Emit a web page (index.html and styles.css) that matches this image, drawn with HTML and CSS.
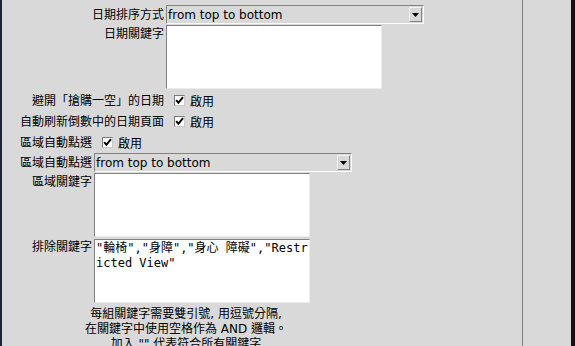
FILE: index.html
```html
<!DOCTYPE html>
<html lang="zh-Hant">
<head>
  <meta charset="UTF-8">
  <meta name="viewport" content="width=device-width, initial-scale=1.0">
  <title>搶票設定</title>
  <link rel="stylesheet" href="styles.css">
</head>
<body>
  <div class="window">
    <div class="panel">

      <div class="form">
        <span class="label">日期排序方式</span>
        <div class="select">
          <span>from top to bottom</span>
          <span class="drop"><svg width="7" height="4" viewBox="0 0 7 4"><polygon points="0,0 7,0 3.5,4" fill="#000"/></svg></span>
        </div>

        <span class="label top">日期關鍵字</span>
        <textarea class="text-box"></textarea>

        <span class="label">避開「搶購一空」的日期</span>
        <label class="check">
          <span class="box"><svg width="9" height="9" viewBox="0 0 9 9"><polyline points="1.2,4.2 3.4,6.8 8,1.2" fill="none" stroke="#000" stroke-width="2"/></svg></span>
          啟用
        </label>

        <span class="label">自動刷新倒數中的日期頁面</span>
        <label class="check">
          <span class="box"><svg width="9" height="9" viewBox="0 0 9 9"><polyline points="1.2,4.2 3.4,6.8 8,1.2" fill="none" stroke="#000" stroke-width="2"/></svg></span>
          啟用
        </label>
      </div>

      <div class="form">
        <span class="label">區域自動點選</span>
        <label class="check">
          <span class="box"><svg width="9" height="9" viewBox="0 0 9 9"><polyline points="1.2,4.2 3.4,6.8 8,1.2" fill="none" stroke="#000" stroke-width="2"/></svg></span>
          啟用
        </label>

        <span class="label">區域自動點選</span>
        <div class="select">
          <span>from top to bottom</span>
          <span class="drop"><svg width="7" height="4" viewBox="0 0 7 4"><polygon points="0,0 7,0 3.5,4" fill="#000"/></svg></span>
        </div>

        <span class="label top">區域關鍵字</span>
        <textarea class="text-box"></textarea>

        <span class="label top">排除關鍵字</span>
        <textarea class="text-box last">"輪椅","身障","身心 障礙","Restricted View"</textarea>

        <p class="hint">每組關鍵字需要雙引號, 用逗號分隔,<br>在關鍵字中使用空格作為 AND 邏輯。<br>加入 "" 代表符合所有關鍵字</p>
      </div>

    </div>
    <div class="side"></div>
  </div>
</body>
</html>
```

FILE: styles.css
```css
body {margin: 0; background: #d9d9d9; color: #000; font: 12px "DejaVu Sans", "Noto Sans CJK TC", sans-serif; overflow: hidden;}
.window {display: flex; height: 346px; border-left: 2px solid #1b2631;}
.panel {flex: 1; padding: 5px 0 0 18px;}
.side {width: 48px; border-left: 1px solid #808080; border-right: 4px solid #121212;}

.form {display: grid; grid-template-columns: auto auto; justify-content: start; column-gap: 2px;}
.label {text-align: right; align-self: center; line-height: 18px; white-space: nowrap;}
.label.top {align-self: start;}

.select {width: 258px; height: 19px; box-sizing: border-box; margin-bottom: 1px; padding-left: 1px; display: flex; align-items: center; justify-content: space-between; border: 1px solid; border-color: #828282 #fff #fff #828282;}
.drop {width: 13px; height: 15px; box-sizing: border-box; margin-right: 1px; display: flex; align-items: center; justify-content: center; border: 1px solid; border-color: #f4f4f4 #828282 #828282 #f4f4f4;}

.text-box {display: block; width: 216px; height: 64px; box-sizing: border-box; margin: 0 0 1px; padding: 1px 0 1px 1px; border: 1px solid; border-color: #828282 #ececec #ececec #828282; background: #fff; color: #000; font: 12px/15px "DejaVu Sans Mono", "Noto Sans CJK TC", monospace; word-break: break-all; resize: none; overflow: hidden; outline: none;}
.text-box.last {margin-top: 1px;}

.check {display: flex; align-items: center; gap: 5px; height: 21px; padding-left: 8px; font-family: "Noto Sans CJK TC", sans-serif;}
.box {width: 11px; height: 11px; box-sizing: border-box; display: flex; align-items: center; justify-content: center; background: #fff; border: 1px solid; border-color: #7a7a7a #c8c8c8 #c8c8c8 #7a7a7a;}

.hint {grid-column: 1 / -1; margin: 3px 0 0; text-align: center; line-height: 15px;}
```
